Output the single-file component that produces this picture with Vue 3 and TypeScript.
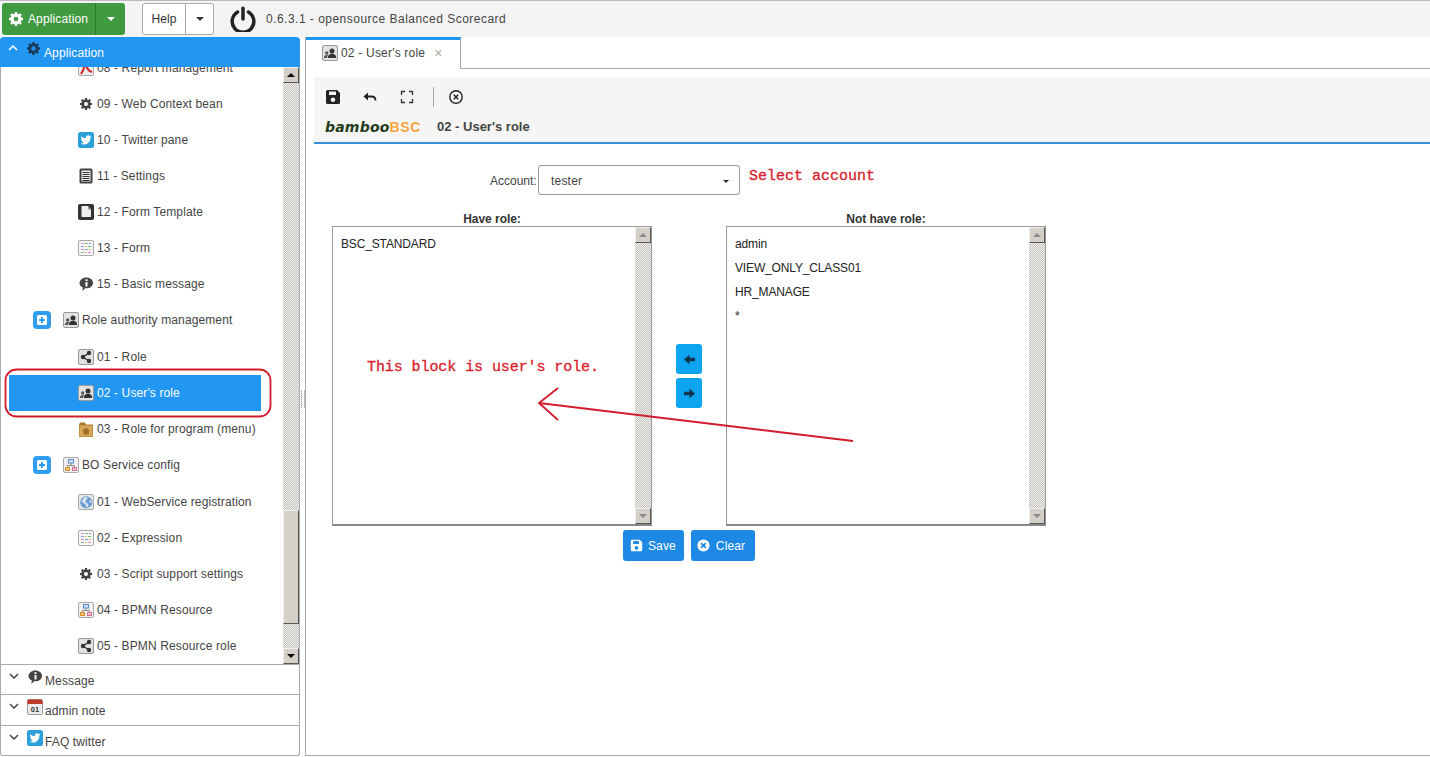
<script setup lang="ts">
interface TreeRow {
  label: string
  icon: string
  group?: boolean
  active?: boolean
  small?: boolean
}

// Navigation rows, scrolled so that the first one is cut by the header
const treeRows: TreeRow[] = [
  { label: '08 - Report management', icon: 'report' },
  { label: '09 - Web Context bean', icon: 'gear', small: true },
  { label: '10 - Twitter pane', icon: 'twitter' },
  { label: '11 - Settings', icon: 'list' },
  { label: '12 - Form Template', icon: 'page' },
  { label: '13 - Form', icon: 'grid' },
  { label: '15 - Basic message', icon: 'info' },
  { label: 'Role authority management', icon: 'users', group: true },
  { label: '01 - Role', icon: 'share' },
  { label: "02 - User's role", icon: 'users', active: true },
  { label: '03 - Role for program (menu)', icon: 'folder' },
  { label: 'BO Service config', icon: 'flow', group: true },
  { label: '01 - WebService registration', icon: 'globe' },
  { label: '02 - Expression', icon: 'grid' },
  { label: '03 - Script support settings', icon: 'gear', small: true },
  { label: '04 - BPMN Resource', icon: 'flow' },
  { label: '05 - BPMN Resource role', icon: 'share' },
]

const panels = [
  { label: 'Message', icon: 'info' },
  { label: 'admin note', icon: 'calendar' },
  { label: 'FAQ twitter', icon: 'twitter' },
]

const haveRoles = ['BSC_STANDARD']
const notHaveRoles = ['admin', 'VIEW_ONLY_CLASS01', 'HR_MANAGE', '*']

const lists = [
  { title: 'Have role:', items: haveRoles },
  { title: 'Not have role:', items: notHaveRoles },
]
</script>

<template>
  <div class="page">
    <!-- icon sprite -->
    <svg class="sprite" aria-hidden="true">
      <defs>
        <symbol id="i-gear" viewBox="0 0 16 16">
          <path fill="currentColor" d="M6.7 0h2.6l.4 2.2 1.2.5L12.800 1.400l1.800 1.800-1.300 1.900.5 1.200 2.200.4v2.600l-2.200.4-.5 1.200 1.300 1.900-1.800 1.800-1.900-1.300-1.200.5-.4 2.200H6.700l-.4-2.200-1.200-.5-1.900 1.300-1.800-1.800 1.300-1.900-.5-1.200L0 9.300V6.700l2.200-.4.5-1.200-1.300-1.900 1.800-1.800 1.900 1.300 1.200-.5zM8 5.300a2.700 2.700 0 1 0 0 5.400 2.700 2.700 0 0 0 0-5.400z" />
        </symbol>
        <symbol id="i-twitter" viewBox="0 0 16 16">
          <rect width="16" height="16" rx="2.500" fill="#2a9fd8" />
          <path fill="#fff" d="M13.400 4.300c-.4.200-.8.300-1.300.4.500-.3.800-.7 1-1.200-.4.300-.9.400-1.400.5a2.200 2.200 0 0 0-3.800 2C6.100 6.400 4.500 5.500 3.400 4.200c-.6 1-.3 2.300.7 3-.4 0-.7-.1-1-.3 0 1.100.8 2 1.800 2.200-.3.100-.7.100-1 0 .3.900 1.100 1.500 2.100 1.500-1 .8-2.200 1.100-3.400 1 3.700 2.300 9.800.6 9.800-6.100.4-.3.700-.7 1-1.200z" />
        </symbol>
        <symbol id="i-report" viewBox="0 0 16 16">
          <rect x=".5" y=".5" width="15" height="15" rx="1.500" fill="#eee" stroke="#aaa" />
          <path fill="none" stroke="#d92020" stroke-width="2" d="M3 14c2-3 4-7 4-12 1 5 3 9 7 10" />
        </symbol>
        <symbol id="i-list" viewBox="0 0 16 16">
          <rect x="1.500" y=".5" width="13" height="15" rx="1.500" fill="#444" />
          <rect x="3.500" y="2.500" width="9" height="11" fill="#eee" />
          <path stroke="#333" d="M4.500 4.500h7M4.500 6.500h7M4.500 8.500h7M4.500 10.500h7M4.500 12.500h7" />
        </symbol>
        <symbol id="i-page" viewBox="0 0 16 16">
          <rect width="16" height="16" rx="2" fill="#333" />
          <path fill="#eee" d="M3.500 2H10l3 3.500V13H3.500z" />
          <path fill="#999" d="M10 2v3.500h3z" />
        </symbol>
        <symbol id="i-grid" viewBox="0 0 16 16">
          <rect x=".5" y=".5" width="15" height="15" rx="1.500" fill="#f5f5f5" stroke="#aaa" />
          <path stroke="#e88ad0" d="M3 3.500h3M3 9.500h3M10 12.500h3" />
          <path stroke="#70c080" d="M7 3.500h3M10 6.500h3M3 12.500h3" />
          <path stroke="#78a4e8" d="M11 3.500h2M3 6.500h3M7 9.500h3" />
          <path stroke="#e8b860" d="M7 6.500h2M11 9.500h2M7 12.500h2" />
        </symbol>
        <symbol id="i-info" viewBox="0 0 16 16">
          <path fill="#444" d="M8.500 1.500c3.600 0 6.500 2.400 6.500 5.400s-2.900 5.400-6.500 5.400H7.200L4.300 15l.6-3.500C2.500 10.600 1.500 8.900 1.500 7c0-3 3.200-5.500 7-5.500z" />
          <path fill="#fff" d="M7.500 3.300h2v1.800h-2zM7.500 6h2v4.500h-2z" />
        </symbol>
        <symbol id="i-users" viewBox="0 0 16 16">
          <rect x=".5" y=".5" width="15" height="15" rx="1.500" fill="#e2e2e2" stroke="#999" />
          <circle cx="10" cy="6" r="2.500" fill="#333" />
          <path fill="#333" d="M5.800 13c0-3 1.800-4.200 4.200-4.200s4.200 1.200 4.200 4.200z" />
          <circle cx="4.700" cy="8" r="1.700" fill="#555" />
          <path fill="#555" d="M1.800 13c0-2 1.200-3 2.900-3 .5 0 1 .1 1.300.3-.6.600-1 1.500-1 2.700z" />
        </symbol>
        <symbol id="i-share" viewBox="0 0 16 16">
          <rect x=".5" y=".5" width="15" height="15" rx="1.500" fill="#e2e2e2" stroke="#999" />
          <path stroke="#333" stroke-width="1.500" d="M11 4 5 8l6 4" fill="none" />
          <circle cx="11" cy="4" r="2.200" fill="#333" />
          <circle cx="5" cy="8" r="2.200" fill="#333" />
          <circle cx="11" cy="12" r="2.200" fill="#333" />
        </symbol>
        <symbol id="i-folder" viewBox="0 0 16 16">
          <path fill="#a87c30" d="M1 3.500 2 1.500h5l1 2h7v11.500a1 1 0 0 1-1 1H2a1 1 0 0 1-1-1z" />
          <rect x="1.500" y="4.500" width="13" height="11" rx="1" fill="#d8a858" />
          <path fill="#a07028" d="m8 6.500 4 3.500h-1.200v3.500H5.200V10H4z" />
        </symbol>
        <symbol id="i-flow" viewBox="0 0 16 16">
          <rect x=".5" y=".5" width="15" height="15" rx="1.500" fill="#f0f0f0" stroke="#aaa" />
          <rect x="5.500" y="2.500" width="5" height="3.500" fill="#cfe0f5" stroke="#5a88c8" />
          <path stroke="#888" fill="none" d="M8 6v2.500M4.500 10.500v-2h7v2" />
          <rect x="2.500" y="10.500" width="4" height="3" fill="#f0c070" stroke="#d89030" />
          <rect x="9.500" y="10.500" width="4" height="3" fill="#f5c0d0" stroke="#d87098" />
        </symbol>
        <symbol id="i-globe" viewBox="0 0 16 16">
          <rect x=".5" y=".5" width="15" height="15" rx="1.500" fill="#e6e6e6" stroke="#aaa" />
          <circle cx="8.200" cy="8.200" r="6" fill="#6d9bd0" />
          <path fill="#d8e4f2" d="M6 3.500 9 3l.5 2-2 1.500L8 9l2 .5.500 3-2 1-1-3-2.500-2-1.500-1zM11.500 6l2 1-.5 2-1.500-1z" />
        </symbol>
        <symbol id="i-calendar" viewBox="0 0 16 16">
          <rect x=".5" y=".5" width="15" height="15" rx="1.500" fill="#ececec" stroke="#999" />
          <path fill="#c0392b" d="M.5 2a1.500 1.500 0 0 1 1.500-1.500h12A1.500 1.500 0 0 1 15.500 2v3H.5z" />
          <text x="8" y="13" font-size="7.500" font-weight="700" text-anchor="middle" fill="#333" font-family="Liberation Sans, sans-serif">01</text>
        </symbol>
        <symbol id="i-save" viewBox="0 0 16 16">
          <path fill="currentColor" d="M1 2.500A1.500 1.500 0 0 1 2.500 1H12l3 3v9.500a1.500 1.500 0 0 1-1.500 1.500h-11A1.500 1.500 0 0 1 1 13.500zM4 2.500V6h7V2.500zM8 8.500a2.300 2.300 0 1 0 0 4.600 2.300 2.300 0 0 0 0-4.600z" fill-rule="evenodd" />
        </symbol>
        <symbol id="i-clear" viewBox="0 0 16 16">
          <circle cx="8" cy="8" r="7.500" fill="currentColor" />
          <path stroke="#1e88e5" stroke-width="2" d="m5 5 6 6M11 5l-6 6" />
        </symbol>
        <symbol id="i-plus" viewBox="0 0 18 18">
          <rect width="18" height="18" rx="4" fill="#2f9df0" />
          <rect x="4" y="4" width="10" height="10" rx="1.500" fill="#fff" />
          <path stroke="#2f9df0" stroke-width="2" d="M9 6v6M6 9h6" />
        </symbol>
      </defs>
    </svg>

    <header class="topbar">
      <div class="btn-group green">
        <button class="btn-main">
          <svg class="ico14"><use href="#i-gear" /></svg>
          Application
        </button>
        <button class="btn-caret"><span class="caret" /></button>
      </div>
      <div class="btn-group plain">
        <button class="btn-main">Help</button>
        <button class="btn-caret"><span class="caret dark" /></button>
      </div>
      <svg class="power" viewBox="0 0 24 24">
        <path fill="none" stroke="#222" stroke-width="3.200" stroke-linecap="round" d="M7 5.500a10 10 0 1 0 10 0" />
        <path stroke="#222" stroke-width="3.200" stroke-linecap="round" d="M12 2v10" />
      </svg>
      <span class="version">0.6.3.1 - opensource Balanced Scorecard</span>
    </header>

    <div class="body">
      <aside class="sidebar">
        <div class="side-head">
          <svg class="chev" viewBox="0 0 10 6"><path d="m1 5 4-4 4 4" /></svg>
          <svg class="head-ico"><use href="#i-gear" /></svg>
          <span class="head-text">Application</span>
        </div>

        <div class="tree-wrap">
          <div class="tree">
            <div
              v-for="row in treeRows"
              :key="row.label"
              class="tree-row"
              :class="{ group: row.group, active: row.active }"
            >
              <svg v-if="row.group" class="plus"><use href="#i-plus" /></svg>
              <svg class="tree-ico" :class="{ small: row.small }"><use :href="`#i-${row.icon}`" /></svg>
              <span>{{ row.label }}</span>
            </div>
          </div>
          <div class="scrollbar tree-bar">
            <div class="sb-btn up dark"><span /></div>
            <div class="sb-track">
              <div class="sb-thumb" />
            </div>
            <div class="sb-btn down dark"><span /></div>
          </div>
        </div>

        <div v-for="p in panels" :key="p.label" class="side-panel">
          <svg class="chev dark" viewBox="0 0 10 6"><path d="m1 1 4 4 4-4" /></svg>
          <svg class="head-ico"><use :href="`#i-${p.icon}`" /></svg>
          <span>{{ p.label }}</span>
        </div>
      </aside>

      <div class="splitter"><span /></div>

      <main class="main">
        <div class="tabs">
          <div class="tab">
            <svg class="tree-ico"><use href="#i-users" /></svg>
            <span>02 - User's role</span>
            <span class="tab-x">×</span>
          </div>
        </div>

        <section class="panel">
          <div class="toolbar">
            <div class="tools">
              <svg class="tool" viewBox="0 0 16 16"><use href="#i-save" /></svg>
              <svg class="tool" viewBox="0 0 16 16">
                <path fill="none" stroke="#222" stroke-width="1.800" d="M3.500 7.500h6c2.500 0 4 1.500 4 4" />
                <path fill="#222" d="M6 3.500v8L1.500 7.500z" />
              </svg>
              <svg class="tool" viewBox="0 0 16 16">
                <path fill="none" stroke="#333" stroke-width="1.300" d="M2.500 6V2.500H6M10 2.500h3.500V6M13.500 10v3.500H10M6 13.500H2.500V10" />
              </svg>
              <span class="tool-sep" />
              <svg class="tool" viewBox="0 0 16 16">
                <circle cx="8" cy="8" r="6.200" fill="none" stroke="#222" stroke-width="1.400" />
                <path stroke="#222" stroke-width="1.500" d="m5.800 5.800 4.400 4.400M10.200 5.800l-4.400 4.400" />
              </svg>
            </div>
            <div class="brand-line">
              <span class="brand"><b>bamboo</b><em>BSC</em></span>
              <span class="brand-title">02 - User's role</span>
            </div>
          </div>

          <div class="form">
            <div class="account-row">
              <label class="account-label">Account:</label>
              <div class="select">
                <span>tester</span>
                <span class="caret dark" />
              </div>
              <span class="note">Select account</span>
            </div>

            <div class="transfer">
              <template v-for="(list, i) in lists" :key="list.title">
                <div class="list-col">
                  <div class="list-title">{{ list.title }}</div>
                  <div class="listbox">
                    <div class="list-items">
                      <div v-for="item in list.items" :key="item" class="list-item">{{ item }}</div>
                    </div>
                    <div class="scrollbar">
                      <div class="sb-btn up"><span /></div>
                      <div class="sb-track" />
                      <div class="sb-btn down"><span /></div>
                    </div>
                  </div>
                </div>
                <div v-if="i === 0" class="move-col">
                  <button class="move">
                    <svg viewBox="0 0 14 14"><path d="M1 7l6-5v3h6v4H7v3z" /></svg>
                  </button>
                  <button class="move">
                    <svg viewBox="0 0 14 14"><path d="M13 7 7 2v3H1v4h6v3z" /></svg>
                  </button>
                </div>
              </template>
            </div>

            <div class="actions">
              <button class="action">
                <svg class="ico13"><use href="#i-save" /></svg>
                Save
              </button>
              <button class="action">
                <svg class="ico13"><use href="#i-clear" /></svg>
                Clear
              </button>
            </div>
          </div>
        </section>
      </main>
    </div>

    <!-- red notes drawn over the screenshot -->
    <span class="block-note">This block is user's role.</span>
    <svg class="overlay" viewBox="0 0 1430 757">
      <rect x="5.500" y="369.500" width="265" height="47" rx="11" />
      <path d="M853 441 539 403M558 388 539 403 558 420" />
    </svg>
  </div>
</template>

<style scoped>
.page {
  position: relative;
  height: 757px;
  width: 1430px;
  overflow: hidden;
  display: flex;
  flex-direction: column;
  background: #fff;
  font: 12px 'Liberation Sans', Arial, sans-serif;
  color: #444;
  letter-spacing: 0.12px;
}
.sprite {
  position: absolute;
  width: 0;
  height: 0;
}
button {
  font: inherit;
  letter-spacing: inherit;
  cursor: pointer;
}
.ico14 {
  width: 14px;
  height: 14px;
  flex: none;
}
.ico13 {
  width: 13px;
  height: 13px;
  flex: none;
}

/* top bar */
.topbar {
  height: 37px;
  flex: none;
  display: flex;
  align-items: center;
  background: #f4f4f4;
  border-top: 1px solid #bbb;
  box-sizing: border-box;
  padding-left: 2px;
}
.btn-group {
  display: flex;
  height: 32px;
  border-radius: 3px;
  overflow: hidden;
}
.btn-group button {
  border: 0;
  background: none;
  padding: 0;
  display: flex;
  align-items: center;
  justify-content: center;
  height: 100%;
}
.green {
  width: 123px;
  background: #3f9a40;
  color: #fff;
}
.green .btn-main {
  width: 93px;
  gap: 5px;
  color: #fff;
}
.green .btn-caret {
  flex: 1;
  border-left: 1px solid #2f7a30;
}
.plain {
  width: 72px;
  margin-left: 17px;
  border: 1px solid #aaa;
  box-sizing: border-box;
  background: #fff;
  color: #333;
}
.plain .btn-main {
  width: 42px;
  color: #333;
}
.plain .btn-caret {
  flex: 1;
  border-left: 1px solid #aaa;
}
.caret {
  display: inline-block;
  width: 0;
  height: 0;
  border-left: 4px solid transparent;
  border-right: 4px solid transparent;
  border-top: 4px solid #fff;
}
.caret.dark {
  border-top-color: #333;
}
.power {
  width: 26px;
  height: 26px;
  margin: -1px 0 0 16px;
}
.version {
  margin-left: 10px;
  color: #444;
  letter-spacing: 0.48px;
}

/* sidebar */
.body {
  flex: 1;
  display: flex;
  min-height: 0;
}
.sidebar {
  width: 300px;
  flex: none;
  box-sizing: border-box;
  display: flex;
  flex-direction: column;
  border: 1px solid #aaa;
  border-top: 0;
  border-radius: 4px 4px 3px 3px;
  height: 719px;
}
.side-head {
  height: 30px;
  margin: 0 -1px;
  background: #2196f3;
  border-radius: 4px 4px 0 0;
  color: #fff;
  position: relative;
  flex: none;
}
.chev {
  position: absolute;
  left: 8px;
  top: 8px;
  width: 10px;
  height: 6px;
  fill: none;
  stroke: #fff;
  stroke-width: 1.500;
}
.chev.dark {
  stroke: #444;
}
.head-ico {
  position: absolute;
  left: 27px;
  top: 5px;
  width: 13px;
  height: 13px;
  color: #1c3a5a;
}
.head-text {
  position: absolute;
  left: 44px;
  top: 9px;
}
.tree-wrap {
  flex: 1;
  min-height: 0;
  display: flex;
  overflow: hidden;
  border-bottom: 1px solid #aaa;
}
.tree {
  flex: 1;
  margin-top: -17px;
}
.tree-row {
  height: 36px;
  width: 252px;
  margin-left: 8px;
  box-sizing: border-box;
  padding-left: 69px;
  display: flex;
  align-items: center;
  gap: 3px;
  color: #444;
  white-space: nowrap;
}
.tree-row.group {
  height: 37px;
  padding-left: 24px;
  padding-bottom: 1px;
}
.tree-row.active {
  background: #2196f3;
  color: #fff;
}
.tree-ico {
  width: 16px;
  height: 16px;
  flex: none;
  color: #444;
}
.tree-ico.small {
  width: 12px;
  height: 12px;
  margin: 0 2px;
}
.plus {
  width: 18px;
  height: 18px;
  flex: none;
  margin-right: 9px;
}
.side-panel {
  height: 30px;
  flex: none;
  position: relative;
  border-bottom: 1px solid #aaa;
  box-sizing: border-box;
  padding: 9px 0 0 44px;
}
.side-panel:nth-child(4) {
  height: 31px;
}
.side-panel:last-child {
  height: 29px;
  border-bottom: 0;
}
.side-panel .chev {
  left: 8px;
  top: 8px;
}
.side-panel .head-ico {
  left: 26px;
  top: 4px;
  width: 16px;
  height: 16px;
}

/* classic scrollbars */
.scrollbar {
  width: 16px;
  flex: none;
  display: flex;
  flex-direction: column;
}
.sb-track {
  flex: 1;
  position: relative;
  background: repeating-conic-gradient(#c4c1ba 0 25%, #f2f2f0 0 50%) 0 0 / 2px 2px;
}
.sb-btn {
  height: 16px;
  flex: none;
  background: #d4d0c8;
  box-sizing: border-box;
  border: 1px solid;
  border-color: #f2f0ec #555 #555 #f2f0ec;
  display: flex;
  align-items: center;
  justify-content: center;
}
.sb-btn span {
  width: 0;
  height: 0;
  border-left: 4px solid transparent;
  border-right: 4px solid transparent;
}
.sb-btn.up span {
  border-bottom: 4px solid #888;
}
.sb-btn.down span {
  border-top: 4px solid #888;
}
.sb-btn.dark.up span {
  border-bottom-color: #000;
}
.sb-btn.dark.down span {
  border-top-color: #000;
}
.sb-thumb {
  position: absolute;
  left: 0;
  right: 0;
  bottom: 24px;
  height: 114px;
  background: #d4d0c8;
  box-sizing: border-box;
  border: 1px solid;
  border-color: #f2f0ec #555 #555 #f2f0ec;
}

.splitter {
  width: 5px;
  flex: none;
  display: flex;
  align-items: center;
  justify-content: center;
}
.splitter span {
  width: 2px;
  height: 18px;
  border-left: 1px solid #bbb;
  border-right: 1px solid #bbb;
  margin-top: 4px;
}

/* main column */
.main {
  flex: 1;
  min-width: 0;
  height: 719px;
  box-sizing: border-box;
  display: flex;
  flex-direction: column;
  border-left: 1px solid #aaa;
  border-bottom: 1px solid #aaa;
}
.tabs {
  height: 32px;
  flex: none;
  display: flex;
  box-sizing: border-box;
  border-bottom: 1px solid #aaa;
}
.tab {
  width: 155px;
  height: 32px;
  box-sizing: border-box;
  border-top: 3px solid #2196f3;
  border-right: 1px solid #aaa;
  background: #fff;
  display: flex;
  align-items: center;
  padding: 0 0 4px 16px;
  gap: 3px;
  color: #444;
  letter-spacing: 0.2px;
}
.tab-x {
  margin-left: 6px;
  color: #aaa;
  font-size: 14px;
}
.panel {
  flex: 1;
  min-height: 0;
  margin: 8px 0 0 8px;
}
.toolbar {
  height: 67px;
  box-sizing: border-box;
  background: #f5f5f5;
  border-bottom: 2px solid #3a8fdc;
  padding: 8px 0 0 11px;
}
.tools {
  display: flex;
  align-items: center;
  height: 24px;
}
.tool {
  width: 16px;
  height: 16px;
  margin-right: 21px;
  color: #222;
}
.tool-sep {
  width: 1px;
  height: 20px;
  background: #aaa;
  margin: 0 14px 0 -3px;
}
.brand-line {
  display: flex;
  align-items: center;
  height: 26px;
  margin-top: 4px;
}
.brand {
  width: 112px;
  display: flex;
  align-items: baseline;
  margin-top: 2px;
}
.brand b {
  font-family: 'DejaVu Sans', sans-serif;
  font-size: 14px;
  font-style: italic;
  font-weight: 700;
  color: #1f3d1a;
  letter-spacing: 0.2px;
}
.brand em {
  font-size: 14px;
  font-style: normal;
  font-weight: 700;
  color: #f5a540;
  letter-spacing: 0.6px;
}
.brand-title {
  font-size: 13px;
  font-weight: 700;
  color: #444;
  letter-spacing: 0;
}
.form {
  padding: 20px 0 0 18px;
}
.account-row {
  display: flex;
  align-items: center;
  height: 32px;
  padding-left: 158px;
}
.account-label {
  width: 48px;
  padding-top: 2px;
  color: #444;
  white-space: nowrap;
  letter-spacing: 0;
}
.select {
  width: 202px;
  height: 30px;
  box-sizing: border-box;
  border: 1px solid #999;
  border-radius: 3px;
  display: flex;
  align-items: center;
  justify-content: space-between;
  padding: 2px 10px 0 12px;
  color: #444;
  letter-spacing: 0.2px;
}
.select .caret {
  border-left-width: 3.500px;
  border-right-width: 3.500px;
  border-top-width: 3px;
}
.note {
  font: 15px 'Liberation Mono', monospace;
  letter-spacing: 0;
  color: #d8202c;
  -webkit-text-stroke: 0.3px #d8202c;
  margin: -8px 0 0 9px;
}
.transfer {
  display: flex;
  margin-top: 14px;
}
.list-col {
  width: 320px;
}
.list-title {
  height: 16px;
  line-height: 18px;
  text-align: center;
  font-weight: 700;
  color: #333;
  letter-spacing: -0.05px;
}
.listbox {
  height: 300px;
  box-sizing: border-box;
  border: 1px solid #999;
  border-bottom: 2px solid #888;
  display: flex;
}
.list-items {
  flex: 1;
  padding: 5px 8px;
}
.list-item {
  height: 24px;
  line-height: 24px;
  color: #222;
  letter-spacing: -0.15px;
}
.move-col {
  width: 74px;
  display: flex;
  flex-direction: column;
  align-items: center;
  gap: 4px;
  padding-top: 134px;
}
.move {
  width: 26px;
  height: 30px;
  padding: 0;
  border: 0;
  border-radius: 3px;
  background: #0ea5f0;
  display: flex;
  align-items: center;
  justify-content: center;
}
.move svg {
  width: 13px;
  height: 13px;
  fill: #12354f;
}
.actions {
  display: flex;
  gap: 7px;
  margin-top: 4px;
  padding-left: 291px;
}
.action {
  height: 31px;
  padding: 0 8px 0 7px;
  border: 0;
  border-radius: 3px;
  background: #1e88e5;
  color: #fff;
  display: flex;
  align-items: center;
  gap: 5px;
}
.action:last-child {
  padding: 0 10px 0 6px;
  gap: 6px;
}

/* annotations */
.block-note {
  position: absolute;
  left: 367px;
  top: 359px;
  font: 15px 'Liberation Mono', monospace;
  letter-spacing: -0.08px;
  color: #d8202c;
  -webkit-text-stroke: 0.3px #d8202c;
}
.overlay {
  position: absolute;
  inset: 0;
  width: 1430px;
  height: 757px;
  fill: none;
  stroke: #d01c2c;
  stroke-width: 1.800;
  pointer-events: none;
}
</style>
